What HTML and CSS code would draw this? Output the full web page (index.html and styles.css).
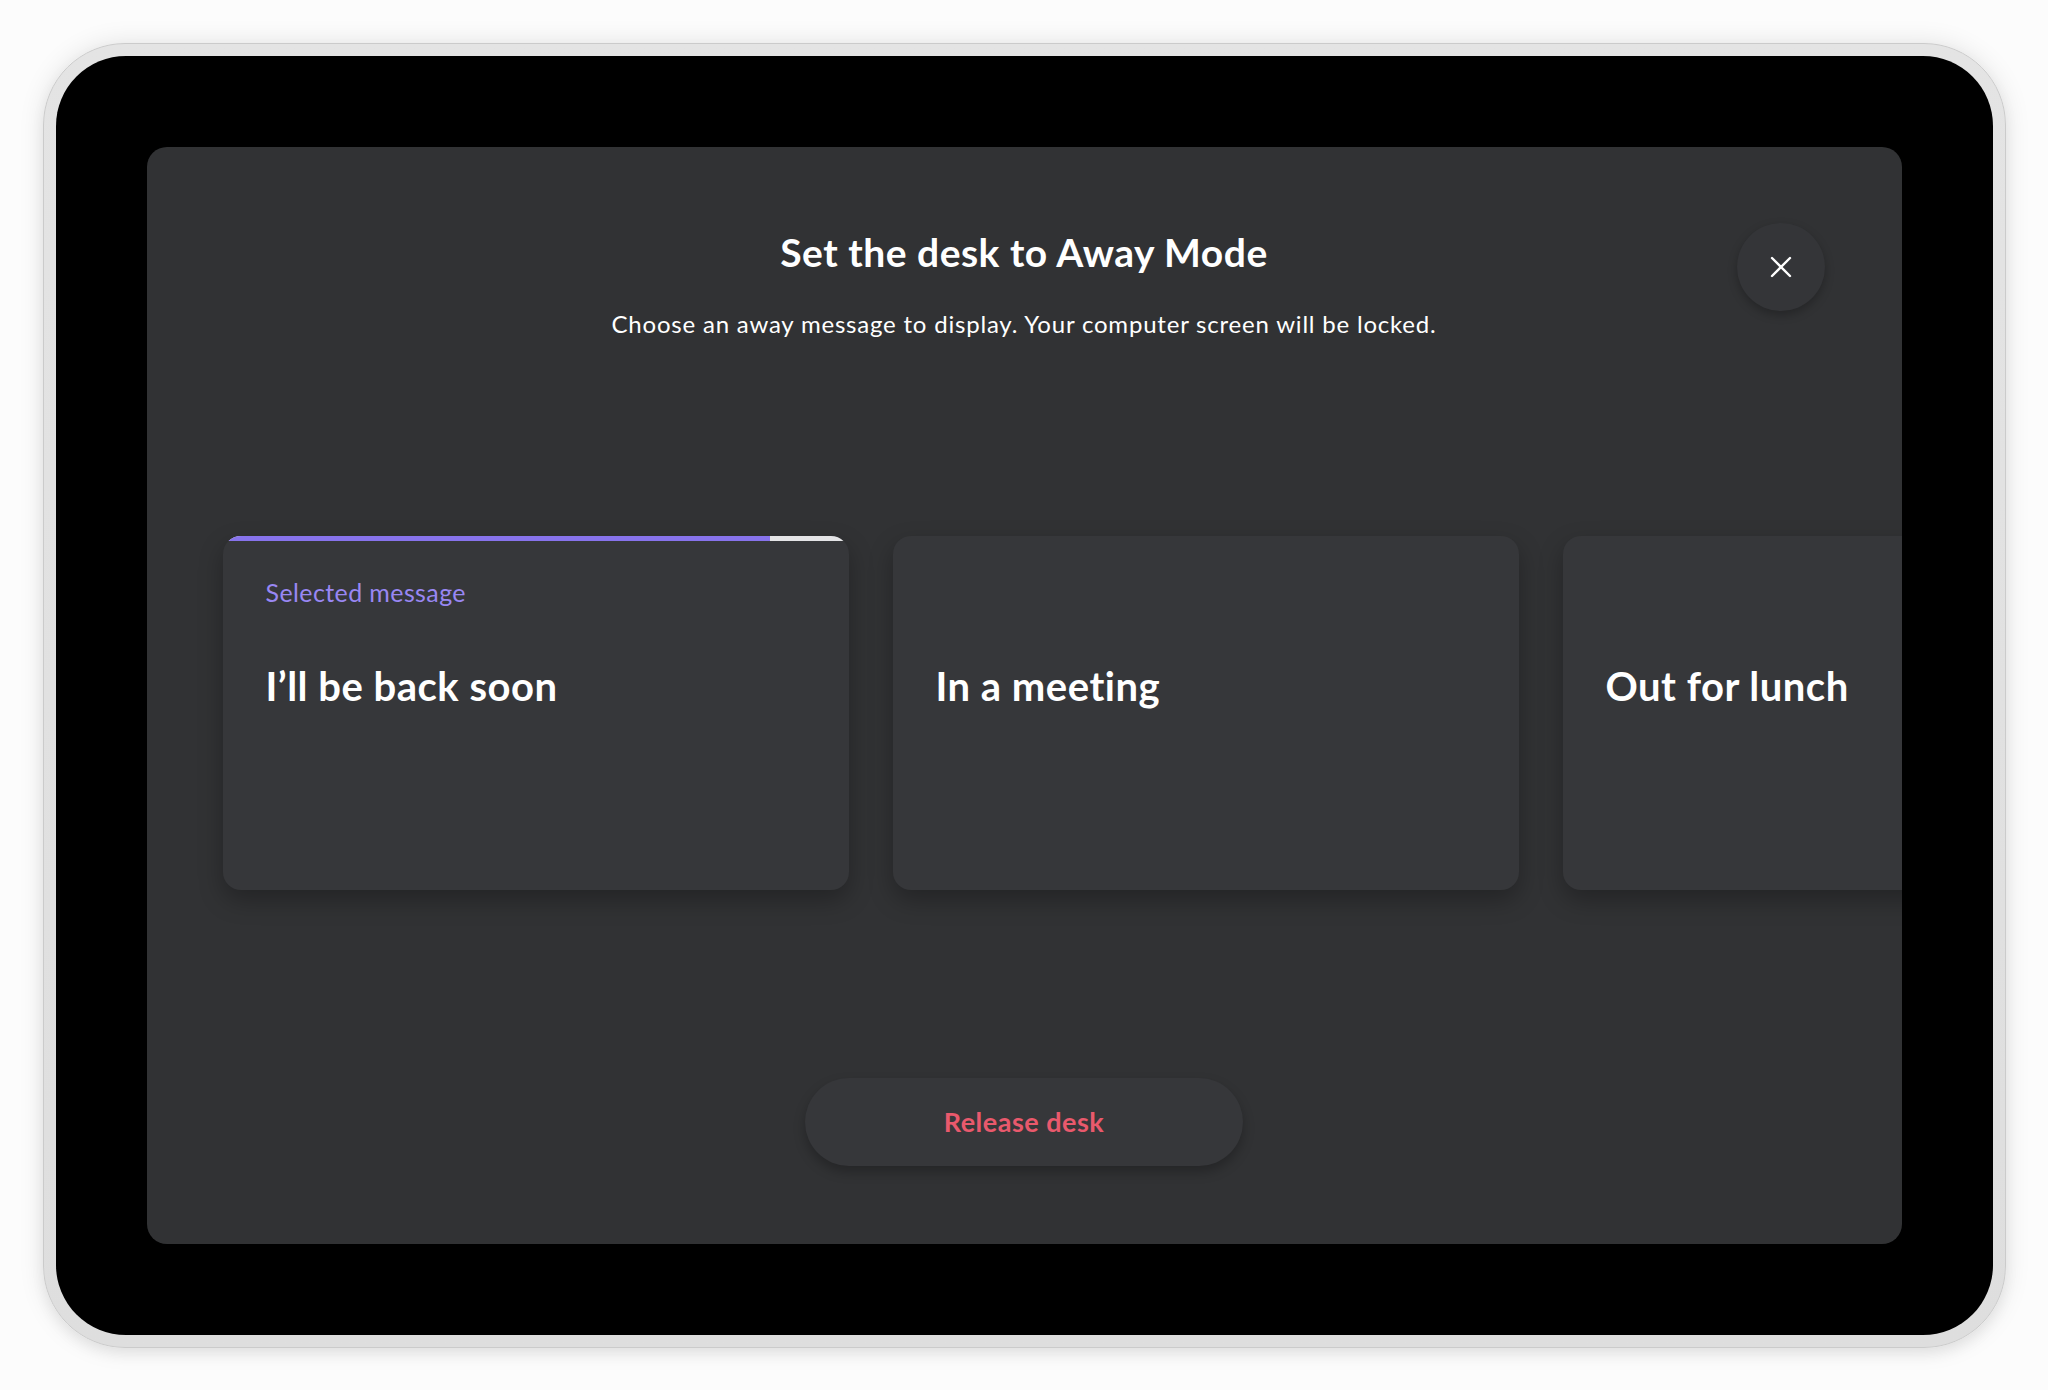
FILE: index.html
```html
<!DOCTYPE html>
<html lang="en">
<head>
  <meta charset="UTF-8">
  <meta name="viewport" content="width=device-width, initial-scale=1.0">
  <title>Away Mode</title>
  <link rel="stylesheet" href="styles.css">
</head>
<body>
  <div class="device">
    <div class="bezel">
      <div class="screen">
        <div class="header">
          <div class="header-side"></div>
          <div class="header-text">
            <h1>Set the desk to Away Mode</h1>
            <p>Choose an away message to display. Your computer screen will be locked.</p>
          </div>
          <div class="header-side">
            <button class="close-btn" aria-label="Close">
              <svg width="22" height="22" viewBox="0 0 22 22">
                <path d="M2 2 L20 20 M20 2 L2 20" stroke="#fff" stroke-width="2.4" stroke-linecap="round" fill="none"/>
              </svg>
            </button>
          </div>
        </div>

        <div class="cards">
          <div class="card selected">
            <div class="progress"><div class="progress-fill" style="width: 87.4%"></div></div>
            <div class="card-body">
              <div class="card-label">Selected message</div>
              <div class="card-title">I’ll be back soon</div>
            </div>
          </div>
          <div class="card">
            <div class="progress"></div>
            <div class="card-body">
              <div class="card-label"></div>
              <div class="card-title">In a meeting</div>
            </div>
          </div>
          <div class="card">
            <div class="progress"></div>
            <div class="card-body">
              <div class="card-label"></div>
              <div class="card-title">Out for lunch</div>
            </div>
          </div>
        </div>

        <div class="footer">
          <button class="release-btn">Release desk</button>
        </div>
      </div>
    </div>
  </div>
</body>
</html>
```

FILE: styles.css
```css
html, body {
  margin: 0;
  padding: 0;
}
body {
  width: 2048px;
  height: 1390px;
  background: #fcfcfc;
  font-family: Lato, "Open Sans", Arial, sans-serif;
  display: flex;
  align-items: center;
  justify-content: center;
  overflow: hidden;
}
.device {
  width: 1963px;
  height: 1305px;
  box-sizing: border-box;
  padding: 12px;
  border-radius: 82px;
  background: linear-gradient(#e4e4e4, #dedede);
  border: 1px solid #cbcbcb;
  box-shadow: 0 0 26px rgba(0, 0, 0, 0.10), 0 6px 14px rgba(0, 0, 0, 0.06);
}
.bezel {
  height: 100%;
  box-sizing: border-box;
  padding: 91px;
  border-radius: 70px;
  background: #000;
}
.screen {
  height: 100%;
  box-sizing: border-box;
  border-radius: 20px;
  background: #313234;
  overflow: hidden;
  padding: 76px 0;
  display: flex;
  flex-direction: column;
}
.header {
  display: grid;
  grid-template-columns: 165px 1fr 165px;
}
.header-side {
  display: flex;
  justify-content: flex-start;
}
.header-text {
  text-align: center;
  color: #fff;
}
.header-text h1 {
  margin: 6px 0 0;
  font-size: 39px;
  line-height: 46px;
  font-weight: 700;
  letter-spacing: 0.5px;
}
.header-text p {
  margin: 34px 0 0;
  font-size: 24px;
  line-height: 30px;
  letter-spacing: 0.8px;
}
.close-btn {
  width: 88px;
  height: 88px;
  border-radius: 50%;
  border: none;
  background: #343538;
  box-shadow: 0 4px 10px rgba(0, 0, 0, 0.25);
  display: flex;
  align-items: center;
  justify-content: center;
  padding: 0;
  cursor: pointer;
}
.cards {
  display: flex;
  gap: 44px;
  margin-top: 197px;
  padding-left: 76px;
}
.card {
  flex: 0 0 626px;
  height: 354px;
  border-radius: 18px;
  background: #36373a;
  box-shadow: 0 10px 24px rgba(0, 0, 0, 0.28);
  overflow: hidden;
}
.progress {
  height: 5px;
}
.selected .progress {
  background: #e4e4e6;
}
.progress-fill {
  height: 100%;
  background: #8773ec;
}
.card-body {
  padding: 36px 43px 0;
}
.card-label {
  height: 30px;
  font-size: 25px;
  line-height: 30px;
  letter-spacing: 0.4px;
  color: #9987f3;
}
.card-title {
  margin-top: 55px;
  font-size: 40px;
  line-height: 48px;
  font-weight: 700;
  letter-spacing: 0.5px;
  color: #fff;
}
.footer {
  display: flex;
  justify-content: center;
  margin-top: 188px;
}
.release-btn {
  width: 438px;
  height: 88px;
  border-radius: 44px;
  border: none;
  background: #36373a;
  box-shadow: 0 6px 12px rgba(0, 0, 0, 0.25);
  font-family: inherit;
  font-size: 27px;
  font-weight: 700;
  letter-spacing: 0.5px;
  color: #e9596c;
  cursor: pointer;
}
```
